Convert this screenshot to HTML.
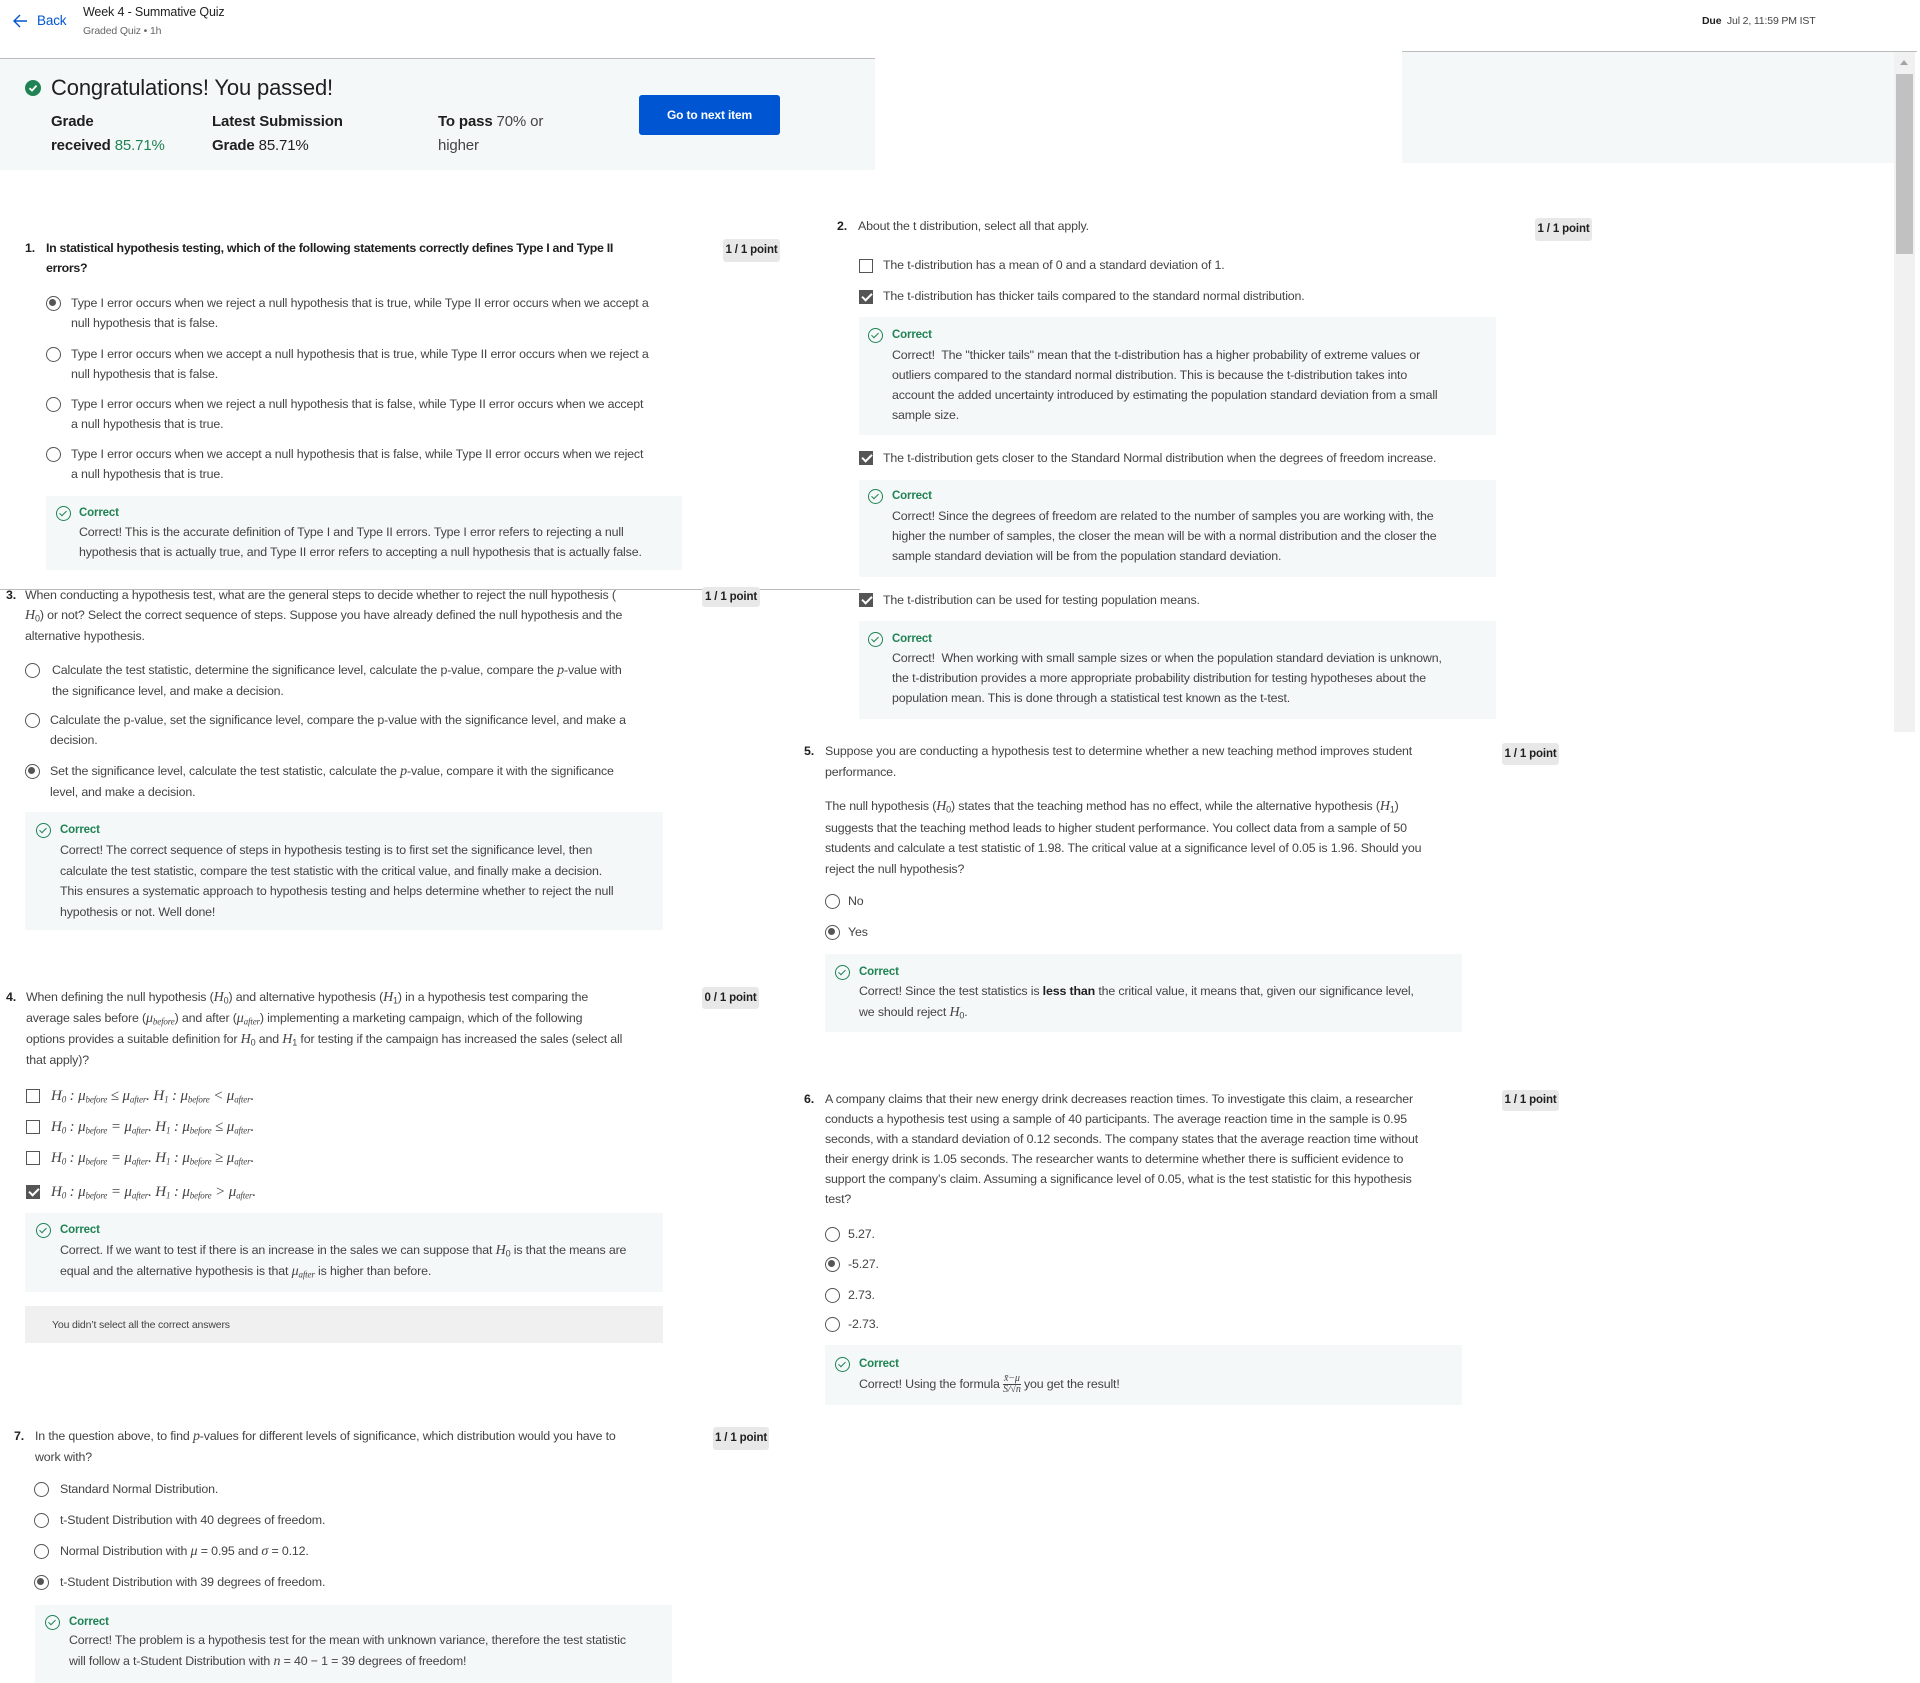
<!DOCTYPE html>
<html><head><meta charset="utf-8">
<style>
*{margin:0;padding:0;box-sizing:border-box}
body{width:1920px;height:1675px;position:relative;overflow:hidden;background:#fff;font-family:"Liberation Sans",sans-serif;color:#444;font-size:12.4px;letter-spacing:-0.15px}
.a{position:absolute;white-space:nowrap;line-height:20px}
.b{font-weight:bold;color:#1f1f1f}
.box{position:absolute;background:#f5f8f8}
.badge{position:absolute;background:#e8e8e8;border-radius:3px;font-weight:bold;color:#1f1f1f;font-size:11.5px;text-align:center;line-height:22px}
.r{position:absolute;width:15px;height:15px;border:1.6px solid #555;border-radius:50%}
.r.on::after{content:"";position:absolute;left:2.4px;top:2.4px;width:7px;height:7px;border-radius:50%;background:#555}
.c{position:absolute;width:14px;height:14px;border:1.6px solid #555}
.c.on{background:#555}
.c.on::after{content:"";position:absolute;left:3.5px;top:0px;width:4px;height:8px;border:solid #fff;border-width:0 2px 2px 0;transform:rotate(45deg)}
.ok{position:absolute;width:15px;height:15px;border:1.3px solid #1f8354;border-radius:50%}
.ok::after{content:"";position:absolute;left:4.3px;top:1.5px;width:3px;height:6px;border:solid #1f8354;border-width:0 1.3px 1.3px 0;transform:rotate(45deg)}
.cg{color:#1f8354;font-weight:bold;font-size:11.5px}
.m{font-family:"Liberation Serif",serif;font-style:italic;font-size:14px}
sub{font-size:9px;line-height:0;vertical-align:-0.3em}
.mo{font-size:15px}
</style></head><body>

<svg style="position:absolute;left:12px;top:13px" width="16" height="16" viewBox="0 0 16 16"><path d="M8 2 L2 8 L8 14 M2 8 H15" stroke="#0056d2" stroke-width="1.4" fill="none"/></svg>
<div class="a" style="left:37px;top:11px;color:#0056d2;font-size:13.5px">Back</div>
<div class="a" style="left:83px;top:2px;color:#1f1f1f;font-size:12.5px">Week 4 - Summative Quiz</div>
<div class="a" style="left:83px;top:21px;color:#666;font-size:10.5px">Graded Quiz • 1h</div>
<div class="a" style="left:1702px;top:11px;font-size:10.5px;color:#444"><b style="color:#1f1f1f">Due</b>&nbsp; Jul 2, 11:59 PM IST</div>
<div style="position:absolute;left:0;top:58px;width:875px;height:1px;background:#bbb"></div>
<div style="position:absolute;left:0;top:59px;width:875px;height:111px;background:#f5f8f8"></div>
<div style="position:absolute;left:1402px;top:51px;width:515px;height:1px;background:#bbb"></div>
<div style="position:absolute;left:1402px;top:52px;width:492px;height:111px;background:#f5f8f8"></div>
<div style="position:absolute;left:1894px;top:52px;width:21px;height:680px;background:#f1f1f1"></div>
<div style="position:absolute;left:1896px;top:74px;width:17px;height:180px;background:#c1c1c1"></div>
<div style="position:absolute;left:1900px;top:60px;width:0;height:0;border-left:4px solid transparent;border-right:4px solid transparent;border-bottom:5px solid #a3a3a3"></div>

<svg style="position:absolute;left:25px;top:80px" width="16" height="16" viewBox="0 0 16 16"><circle cx="8" cy="8" r="8" fill="#1f8354"/><path d="M4.5 8.2 L7 10.6 L11.5 5.6" stroke="#fff" stroke-width="1.8" fill="none"/></svg>
<div class="a" style="left:51px;top:74px;font-size:22px;line-height:28px;color:#1f1f1f">Congratulations! You passed!</div>
<div class="a" style="left:51px;top:110px;font-size:15px;line-height:24px;color:#1f1f1f"><b>Grade</b><br><b>received</b> <span style="color:#1f8354">85.71%</span></div>
<div class="a" style="left:212px;top:110px;font-size:15px;line-height:24px;color:#1f1f1f"><b>Latest Submission</b><br><b>Grade</b> 85.71%</div>
<div class="a" style="left:438px;top:110px;font-size:15px;line-height:24px;color:#444"><b style="color:#1f1f1f">To pass</b> 70% or<br>higher</div>
<div style="position:absolute;left:639px;top:95px;width:141px;height:40px;background:#0056d2;border-radius:3px;color:#fff;font-weight:bold;font-size:12px;text-align:center;line-height:40px">Go to next item</div>

<div class="a b" style="left:25px;top:238px">1.</div>
<div class="a b" style="left:46px;top:238px;letter-spacing:-0.3px">In statistical hypothesis testing, which of the following statements correctly defines Type I and Type II<br>errors?</div>
<div class="badge" style="left:723px;top:239px;width:57px;height:23px">1 / 1 point</div>
<div class="r on" style="left:46px;top:296px"></div>
<div class="a" style="left:71px;top:293px">Type I error occurs when we reject a null hypothesis that is true, while Type II error occurs when we accept a<br>null hypothesis that is false.</div>
<div class="r" style="left:46px;top:347px"></div>
<div class="a" style="left:71px;top:344px">Type I error occurs when we accept a null hypothesis that is true, while Type II error occurs when we reject a<br>null hypothesis that is false.</div>
<div class="r" style="left:46px;top:397px"></div>
<div class="a" style="left:71px;top:394px">Type I error occurs when we reject a null hypothesis that is false, while Type II error occurs when we accept<br>a null hypothesis that is true.</div>
<div class="r" style="left:46px;top:447px"></div>
<div class="a" style="left:71px;top:444px">Type I error occurs when we accept a null hypothesis that is false, while Type II error occurs when we reject<br>a null hypothesis that is true.</div>
<div class="box" style="left:46px;top:496px;width:636px;height:74px"></div>
<div class="ok" style="left:56px;top:506px"></div>
<div class="a cg" style="left:79px;top:503px">Correct</div>
<div class="a" style="left:79px;top:522px">Correct! This is the accurate definition of Type I and Type II errors. Type I error refers to rejecting a null<br>hypothesis that is actually true, and Type II error refers to accepting a null hypothesis that is actually false.</div>

<div style="position:absolute;left:0;top:589px;width:860px;height:1px;background:#bbb"></div>

<div class="a b" style="left:6px;top:585px">3.</div>
<div class="a" style="left:25px;top:585px">When conducting a hypothesis test, what are the general steps to decide whether to reject the null hypothesis (<br><span class="m">H</span><sub>0</sub>) or not? Select the correct sequence of steps. Suppose you have already defined the null hypothesis and the<br>alternative hypothesis.</div>
<div class="badge" style="left:702px;top:587px;width:58px;height:20px;line-height:20px">1 / 1 point</div>
<div class="r" style="left:25px;top:663px"></div>
<div class="a" style="left:52px;top:660px">Calculate the test statistic, determine the significance level, calculate the p-value, compare the <span class="m">p</span>-value with<br>the significance level, and make a decision.</div>
<div class="r" style="left:25px;top:713px"></div>
<div class="a" style="left:50px;top:710px">Calculate the p-value, set the significance level, compare the p-value with the significance level, and make a<br>decision.</div>
<div class="r on" style="left:25px;top:764px"></div>
<div class="a" style="left:50px;top:761px">Set the significance level, calculate the test statistic, calculate the <span class="m">p</span>-value, compare it with the significance<br>level, and make a decision.</div>
<div class="box" style="left:25px;top:812px;width:638px;height:118px"></div>
<div class="ok" style="left:36px;top:823px"></div>
<div class="a cg" style="left:60px;top:820px">Correct</div>
<div class="a" style="left:60px;top:840px;line-height:20.5px">Correct! The correct sequence of steps in hypothesis testing is to first set the significance level, then<br>calculate the test statistic, compare the test statistic with the critical value, and finally make a decision.<br>This ensures a systematic approach to hypothesis testing and helps determine whether to reject the null<br>hypothesis or not. Well done!</div>

<div class="a b" style="left:6px;top:987px">4.</div>
<div class="a" style="left:26px;top:987px;line-height:21px">When defining the null hypothesis (<span class="m">H</span><sub>0</sub>) and alternative hypothesis (<span class="m">H</span><sub>1</sub>) in a hypothesis test comparing the<br>average sales before (<span class="m">μ<sub>before</sub></span>) and after (<span class="m">μ<sub>after</sub></span>) implementing a marketing campaign, which of the following<br>options provides a suitable definition for <span class="m">H</span><sub>0</sub> and <span class="m">H</span><sub>1</sub> for testing if the campaign has increased the sales (select all<br>that apply)?</div>
<div class="badge" style="left:702px;top:987px;width:57px;height:22px">0 / 1 point</div>
<div class="c" style="left:26px;top:1089px"></div>
<div class="a m mo" style="left:51px;top:1086px">H<sub>0</sub> : μ<sub>before</sub> ≤ μ<sub>after</sub>. H<sub>1</sub> : μ<sub>before</sub> &lt; μ<sub>after</sub>.</div>
<div class="c" style="left:26px;top:1120px"></div>
<div class="a m mo" style="left:51px;top:1117px">H<sub>0</sub> : μ<sub>before</sub> = μ<sub>after</sub>. H<sub>1</sub> : μ<sub>before</sub> ≤ μ<sub>after</sub>.</div>
<div class="c" style="left:26px;top:1151px"></div>
<div class="a m mo" style="left:51px;top:1148px">H<sub>0</sub> : μ<sub>before</sub> = μ<sub>after</sub>. H<sub>1</sub> : μ<sub>before</sub> ≥ μ<sub>after</sub>.</div>
<div class="c on" style="left:26px;top:1185px"></div>
<div class="a m mo" style="left:51px;top:1182px">H<sub>0</sub> : μ<sub>before</sub> = μ<sub>after</sub>. H<sub>1</sub> : μ<sub>before</sub> &gt; μ<sub>after</sub>.</div>
<div class="box" style="left:25px;top:1213px;width:638px;height:79px"></div>
<div class="ok" style="left:36px;top:1223px"></div>
<div class="a cg" style="left:60px;top:1220px">Correct</div>
<div class="a" style="left:60px;top:1240px;line-height:21px">Correct. If we want to test if there is an increase in the sales we can suppose that <span class="m">H</span><sub>0</sub> is that the means are<br>equal and the alternative hypothesis is that <span class="m">μ<sub>after</sub></span> is higher than before.</div>
<div style="position:absolute;left:25px;top:1306px;width:638px;height:37px;background:#f0f0f0"></div>
<div class="a" style="left:52px;top:1315px;font-size:10.5px">You didn’t select all the correct answers</div>

<div class="a b" style="left:14px;top:1426px">7.</div>
<div class="a" style="left:35px;top:1426px">In the question above, to find <span class="m">p</span>-values for different levels of significance, which distribution would you have to<br>work with?</div>
<div class="badge" style="left:713px;top:1427px;width:56px;height:23px">1 / 1 point</div>
<div class="r" style="left:34px;top:1482px"></div>
<div class="a" style="left:60px;top:1479px">Standard Normal Distribution.</div>
<div class="r" style="left:34px;top:1513px"></div>
<div class="a" style="left:60px;top:1510px">t-Student Distribution with 40 degrees of freedom.</div>
<div class="r" style="left:34px;top:1544px"></div>
<div class="a" style="left:60px;top:1541px">Normal Distribution with <span class="m">μ</span> = 0.95 and <span class="m">σ</span> = 0.12.</div>
<div class="r on" style="left:34px;top:1575px"></div>
<div class="a" style="left:60px;top:1572px">t-Student Distribution with 39 degrees of freedom.</div>
<div class="box" style="left:35px;top:1605px;width:637px;height:78px"></div>
<div class="ok" style="left:45px;top:1615px"></div>
<div class="a cg" style="left:69px;top:1612px">Correct</div>
<div class="a" style="left:69px;top:1630px;line-height:21px">Correct! The problem is a hypothesis test for the mean with unknown variance, therefore the test statistic<br>will follow a t-Student Distribution with <span class="m">n</span> = 40 − 1 = 39 degrees of freedom!</div>

<div class="a b" style="left:837px;top:216px">2.</div>
<div class="a" style="left:858px;top:216px">About the t distribution, select all that apply.</div>
<div class="badge" style="left:1535px;top:218px;width:57px;height:23px">1 / 1 point</div>
<div class="c" style="left:859px;top:259px"></div>
<div class="a" style="left:883px;top:255px">The t-distribution has a mean of 0 and a standard deviation of 1.</div>
<div class="c on" style="left:859px;top:290px"></div>
<div class="a" style="left:883px;top:286px">The t-distribution has thicker tails compared to the standard normal distribution.</div>
<div class="box" style="left:859px;top:317px;width:637px;height:118px"></div>
<div class="ok" style="left:868px;top:328px"></div>
<div class="a cg" style="left:892px;top:325px">Correct</div>
<div class="a" style="left:892px;top:345px;line-height:20px">Correct!&nbsp; The "thicker tails" mean that the t-distribution has a higher probability of extreme values or<br>outliers compared to the standard normal distribution. This is because the t-distribution takes into<br>account the added uncertainty introduced by estimating the population standard deviation from a small<br>sample size.</div>
<div class="c on" style="left:859px;top:451px"></div>
<div class="a" style="left:883px;top:448px">The t-distribution gets closer to the Standard Normal distribution when the degrees of freedom increase.</div>
<div class="box" style="left:859px;top:480px;width:637px;height:97px"></div>
<div class="ok" style="left:868px;top:489px"></div>
<div class="a cg" style="left:892px;top:486px">Correct</div>
<div class="a" style="left:892px;top:506px">Correct! Since the degrees of freedom are related to the number of samples you are working with, the<br>higher the number of samples, the closer the mean will be with a normal distribution and the closer the<br>sample standard deviation will be from the population standard deviation.</div>
<div class="c on" style="left:859px;top:593px"></div>
<div class="a" style="left:883px;top:590px">The t-distribution can be used for testing population means.</div>
<div class="box" style="left:859px;top:621px;width:637px;height:98px"></div>
<div class="ok" style="left:868px;top:632px"></div>
<div class="a cg" style="left:892px;top:629px">Correct</div>
<div class="a" style="left:892px;top:648px">Correct!&nbsp; When working with small sample sizes or when the population standard deviation is unknown,<br>the t-distribution provides a more appropriate probability distribution for testing hypotheses about the<br>population mean. This is done through a statistical test known as the t-test.</div>

<div class="a b" style="left:804px;top:741px">5.</div>
<div class="a" style="left:825px;top:741px;line-height:21px">Suppose you are conducting a hypothesis test to determine whether a new teaching method improves student<br>performance.</div>
<div class="badge" style="left:1502px;top:743px;width:57px;height:22px">1 / 1 point</div>
<div class="a" style="left:825px;top:796px;line-height:20.5px">The null hypothesis (<span class="m">H</span><sub>0</sub>) states that the teaching method has no effect, while the alternative hypothesis (<span class="m">H</span><sub>1</sub>)<br>suggests that the teaching method leads to higher student performance. You collect data from a sample of 50<br>students and calculate a test statistic of 1.98. The critical value at a significance level of 0.05 is 1.96. Should you<br>reject the null hypothesis?</div>
<div class="r" style="left:825px;top:894px"></div>
<div class="a" style="left:848px;top:891px">No</div>
<div class="r on" style="left:825px;top:925px"></div>
<div class="a" style="left:848px;top:922px">Yes</div>
<div class="box" style="left:825px;top:954px;width:637px;height:78px"></div>
<div class="ok" style="left:835px;top:965px"></div>
<div class="a cg" style="left:859px;top:962px">Correct</div>
<div class="a" style="left:859px;top:981px;line-height:21px">Correct! Since the test statistics is <b style="color:#1f1f1f">less than</b> the critical value, it means that, given our significance level,<br>we should reject <span class="m">H</span><sub>0</sub>.</div>

<div class="a b" style="left:804px;top:1089px">6.</div>
<div class="a" style="left:825px;top:1089px">A company claims that their new energy drink decreases reaction times. To investigate this claim, a researcher<br>conducts a hypothesis test using a sample of 40 participants. The average reaction time in the sample is 0.95<br>seconds, with a standard deviation of 0.12 seconds. The company states that the average reaction time without<br>their energy drink is 1.05 seconds. The researcher wants to determine whether there is sufficient evidence to<br>support the company’s claim. Assuming a significance level of 0.05, what is the test statistic for this hypothesis<br>test?</div>
<div class="badge" style="left:1502px;top:1090px;width:57px;height:21px;line-height:21px">1 / 1 point</div>
<div class="r" style="left:825px;top:1227px"></div>
<div class="a" style="left:848px;top:1224px">5.27.</div>
<div class="r on" style="left:825px;top:1257px"></div>
<div class="a" style="left:848px;top:1254px">-5.27.</div>
<div class="r" style="left:825px;top:1288px"></div>
<div class="a" style="left:848px;top:1285px">2.73.</div>
<div class="r" style="left:825px;top:1317px"></div>
<div class="a" style="left:848px;top:1314px">-2.73.</div>
<div class="box" style="left:825px;top:1345px;width:637px;height:60px"></div>
<div class="ok" style="left:835px;top:1357px"></div>
<div class="a cg" style="left:859px;top:1354px">Correct</div>
<div class="a" style="left:859px;top:1374px">Correct! Using the formula <span style="display:inline-block;vertical-align:middle;text-align:center;font-family:'Liberation Serif',serif;font-style:italic;font-size:10px;line-height:10px"><span style="display:block;border-bottom:1px solid #444">x̄−μ</span><span style="display:block">S/√n</span></span> you get the result!</div>

</body></html>
